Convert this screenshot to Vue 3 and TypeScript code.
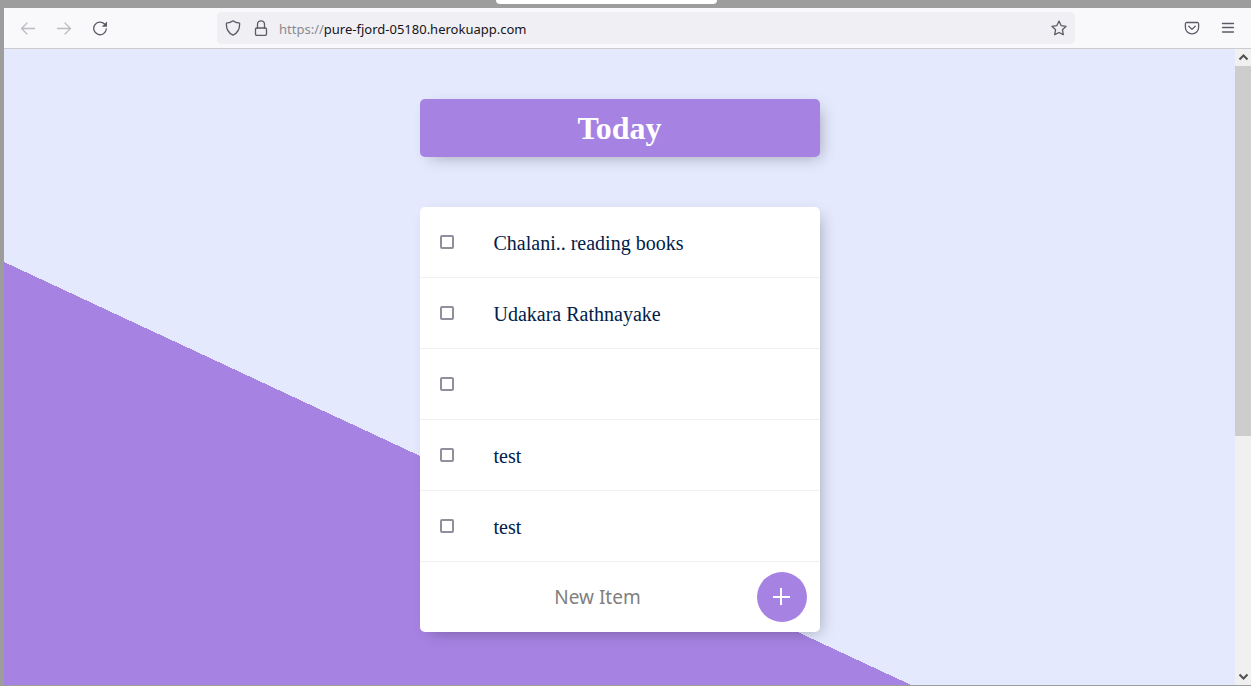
<script setup lang="ts">
import { ref } from 'vue'

interface Item {
  id: number
  name: string
  done: boolean
}

const items = ref<Item[]>([
  { id: 1, name: 'Chalani.. reading books', done: false },
  { id: 2, name: 'Udakara Rathnayake', done: false },
  { id: 3, name: '', done: false },
  { id: 4, name: 'test', done: false },
  { id: 5, name: 'test', done: false },
])
const newItem = ref('')

function addItem(): void {
  items.value.push({ id: items.value.length + 1, name: newItem.value, done: false })
  newItem.value = ''
}
</script>

<template>
  <div class="desktop">
    <div class="titlebar"><div class="tab"></div></div>
    <div class="browser">
      <header class="toolbar">
        <nav class="nav" aria-label="Browser navigation">
          <button type="button" class="tool faded" aria-label="Back">
            <svg viewBox="0 0 16 16"><path d="M14.500 8.500H1.500M7 3L1.500 8.500 7 14" /></svg>
          </button>
          <button type="button" class="tool faded" aria-label="Forward">
            <svg viewBox="0 0 16 16"><path d="M1.500 8.500h13M9 3l5.500 5.500L9 14" /></svg>
          </button>
          <button type="button" class="tool" aria-label="Reload">
            <svg viewBox="0 0 16 16">
              <path d="M12.500 4A6.300 6.300 0 1 0 14.300 9" />
              <path class="solid" d="M15 1.500v5.200h-5.200z" />
            </svg>
          </button>
        </nav>
        <div class="urlbar">
          <svg class="glyph" viewBox="0 0 16 16">
            <path d="M8 .8C6.200 2.200 3.800 2.900 1.400 3.200c-.3 4.800 1.600 9.600 6.600 12 5-2.400 6.900-7.200 6.600-12C12.200 2.900 9.800 2.200 8 .8z" />
          </svg>
          <svg class="glyph" viewBox="0 0 16 16">
            <rect x="2.500" y="8" width="11" height="7.300" rx="1.200" />
            <path d="M4.500 8V4.300a3.500 3.500 0 0 1 7 0V8" />
          </svg>
          <span class="address"><span class="scheme">https://</span>pure-fjord-05180.herokuapp.com</span>
          <button type="button" class="tool star" aria-label="Bookmark this page">
            <svg viewBox="0 0 16 16">
              <path d="M8 1.100l2.100 4.500 5 .7-3.700 3.400.9 5L8 12.500l-4.300 2.200.9-5L.9 6.300l5-.7z" />
            </svg>
          </button>
        </div>
        <div class="actions">
          <button type="button" class="tool" aria-label="Save to Pocket">
            <svg viewBox="0 0 16 16">
              <path d="M2.700 2.500h10.600a1.300 1.300 0 0 1 1.300 1.300v3.700a6.600 6.300 0 0 1-13.200 0V3.800a1.300 1.300 0 0 1 1.300-1.300z" />
              <path d="M4.800 6.300L8 9.400l3.200-3.100" />
            </svg>
          </button>
          <button type="button" class="tool" aria-label="Menu">
            <svg viewBox="0 0 16 16"><path d="M2.500 3.500h11M2.500 7.500h11M2.500 12h11" /></svg>
          </button>
        </div>
      </header>
      <div class="viewport">
        <main class="page">
          <div class="heading box"><h1>Today</h1></div>
          <div class="list box">
            <label v-for="item in items" :key="item.id" class="item">
              <input v-model="item.done" type="checkbox" :aria-label="item.name || 'Untitled'" />
              <span>{{ item.name }}</span>
            </label>
            <form class="add" @submit.prevent="addItem">
              <input v-model="newItem" type="text" placeholder="New Item" aria-label="New Item" autocomplete="off" />
              <button type="submit" aria-label="Add item">
                <svg viewBox="0 0 18 18"><path d="M8 0v17M0 9h17" /></svg>
              </button>
            </form>
          </div>
        </main>
        <div class="scrollbar" aria-hidden="true">
          <svg viewBox="0 0 16 17"><path d="M4.500 10.500l4-4 4 4" /></svg>
          <div class="track"><div class="thumb"></div></div>
          <svg viewBox="0 0 16 17"><path d="M4.500 6.500l4 4 4-4" /></svg>
        </div>
      </div>
    </div>
  </div>
</template>

<style>
body {
  margin: 0;
}
</style>

<style scoped>
* {
  box-sizing: border-box;
}
svg {
  display: block;
  fill: none;
  stroke: currentColor;
}
button {
  border: 0;
  padding: 0;
  background: none;
  color: inherit;
}
.desktop {
  display: flex;
  flex-direction: column;
  height: 100vh;
  padding: 0 0 1px 4px;
  background: #9d9d9d;
}
.titlebar {
  display: flex;
  justify-content: center;
  flex: none;
  height: 8px;
  padding-right: 42px;
}
.tab {
  width: 221px;
  height: 4px;
  border-radius: 0 0 4px 4px;
  background: #fff;
}
.browser {
  display: flex;
  flex: 1;
  flex-direction: column;
  min-height: 0;
}
.toolbar {
  display: flex;
  flex: none;
  align-items: center;
  height: 41px;
  border-bottom: 1px solid #cccccc;
  background: #f9f9fb;
  color: #5b5b66;
}
.nav {
  display: flex;
  flex: none;
  gap: 20px;
  width: 213px;
  padding-left: 16px;
}
.tool {
  width: 16px;
  height: 16px;
}
.tool svg,
.glyph {
  width: 16px;
  height: 16px;
  stroke-width: 1.3;
  stroke-linecap: round;
  stroke-linejoin: round;
}
.faded {
  color: #bdbdc1;
}
.solid {
  fill: currentColor;
  stroke: none;
}
.urlbar {
  display: flex;
  flex: 1;
  align-items: center;
  gap: 12px;
  height: 32px;
  padding: 0 8px;
  border-radius: 4px;
  background: #f0eff4;
}
.address {
  margin-right: auto;
  margin-left: -2px;
  padding-top: 2px;
  color: #15141a;
  font: 13px/20px "Noto Sans", "Open Sans", sans-serif;
}
.scheme {
  color: #8a8a90;
}
.actions {
  display: flex;
  flex: none;
  justify-content: flex-end;
  gap: 20px;
  width: 176px;
  padding-right: 15px;
}
.viewport {
  display: flex;
  flex: 1;
  min-height: 0;
}
.page {
  flex: 1;
  overflow: hidden;
  padding: 50px 0;
  background: linear-gradient(25deg, #a683e3 50%, #e4e9fd 50%) top / 100% 1000px;
  color: #00204a;
  font-family: "Liberation Serif", "Times New Roman", serif;
}
.box {
  width: 100%;
  max-width: 400px;
  margin: 0 auto 50px;
  border-radius: 5px;
  background: #fff;
  box-shadow: 5px 5px 15px -5px rgba(0, 0, 0, 0.3);
}
.heading {
  padding: 10px;
  background: #a683e3;
  color: #fff;
  text-align: center;
}
h1 {
  margin: 0;
  font-size: 32px;
  line-height: 38px;
}
.item {
  display: flex;
  align-items: center;
  gap: 40px;
  height: 71px;
  padding: 0 20px;
  border-bottom: 1px solid #f1f1f1;
  font-size: 20px;
  line-height: 24px;
}
.item span {
  padding-top: 2px;
}
.item input {
  appearance: none;
  width: 14px;
  height: 14px;
  margin: 0;
  border: 2px solid #8f8f9d;
  border-radius: 2px;
  background: #fff;
}
.item input:checked {
  background: #a683e3;
}
.item input:checked + span {
  text-decoration: line-through;
}
.add {
  display: flex;
  align-items: center;
  justify-content: flex-end;
  gap: 39px;
  height: 70px;
  padding-right: 13px;
}
.add input {
  width: 240px;
  height: 60px;
  padding: 0;
  border: 0;
  outline: 0;
  background: transparent;
  color: #00204a;
  font: 19px/24px "Noto Sans", sans-serif;
  text-align: center;
}
.add input::placeholder {
  color: #808080;
  opacity: 1;
}
.add button {
  display: grid;
  flex: none;
  place-items: center;
  width: 50px;
  height: 50px;
  border-radius: 50%;
  background: #a683e3;
  color: #fff;
}
.add svg {
  width: 18px;
  height: 18px;
  stroke-width: 2;
}
.scrollbar {
  display: flex;
  flex: none;
  flex-direction: column;
  width: 16px;
  background: #f0f0f0;
  color: #505050;
}
.scrollbar svg {
  flex: none;
  width: 16px;
  height: 17px;
  stroke-width: 2;
}
.track {
  flex: 1;
}
.thumb {
  height: 61.5%;
  background: #cdcdcd;
}
</style>
